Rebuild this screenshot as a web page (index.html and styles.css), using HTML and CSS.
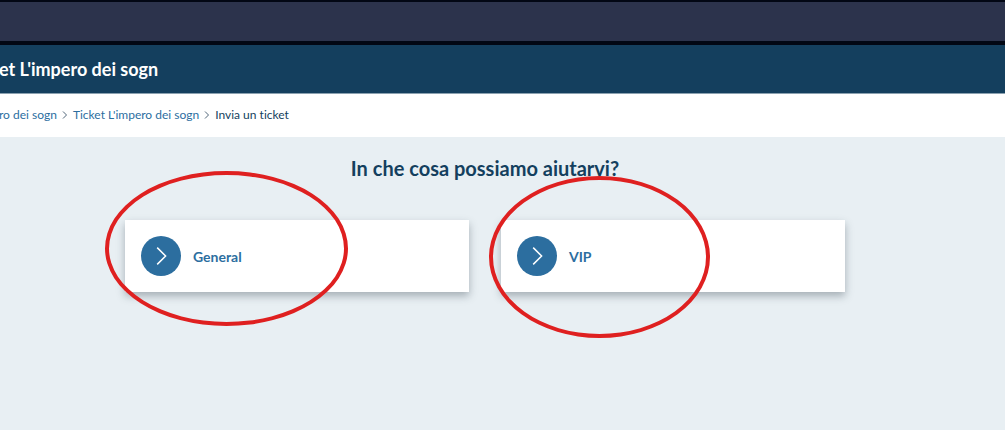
FILE: index.html
```html
<!DOCTYPE html>
<html lang="it">
<head>
<meta charset="utf-8">
<title>Invia un ticket</title>
<link rel="stylesheet" href="styles.css">
</head>
<body>
<div class="topbar"></div>
<header class="header"><span class="brand">et L'impero dei sogn</span></header>
<nav class="breadcrumb" aria-label="Breadcrumb">
  <a href="#">ro dei sogn</a>
  <svg class="sep" viewBox="0 0 6 10" aria-hidden="true"><path d="M1 1.5 4.5 5 1 8.5"/></svg>
  <a href="#">Ticket L'impero dei sogn</a>
  <svg class="sep" viewBox="0 0 6 10" aria-hidden="true"><path d="M1 1.5 4.5 5 1 8.5"/></svg>
  <span class="current">Invia un ticket</span>
</nav>
<main class="main">
  <div class="content">
    <h1 class="title">In che cosa possiamo aiutarvi?</h1>
    <div class="cards">
      <a class="card" href="#">
        <svg class="icon" viewBox="0 0 40 40" aria-hidden="true"><circle cx="20" cy="20" r="20"/><path d="M16.2 11.6 24.6 20 16.2 28.4"/></svg>
        <span class="label">General</span>
        <i class="ring ring-general"></i>
      </a>
      <a class="card" href="#">
        <svg class="icon" viewBox="0 0 40 40" aria-hidden="true"><circle cx="20" cy="20" r="20"/><path d="M16.2 11.6 24.6 20 16.2 28.4"/></svg>
        <span class="label">VIP</span>
        <i class="ring ring-vip"></i>
      </a>
    </div>
  </div>
</main>
</body>
</html>
```
FILE: styles.css
```css
* { box-sizing: border-box; }

body {
  margin: 0;
  min-height: 100vh;
  display: flex;
  flex-direction: column;
  font-family: Lato, "Liberation Sans", sans-serif;
  font-variant-ligatures: none;
  background: #e8eff3;
}

a { color: #2c6e9f; text-decoration: none; }

.topbar {
  height: 45px;
  background: #2c334c;
  border-top: 2px solid #020714;
  border-bottom: 4px solid #020714;
}

.header {
  display: flex;
  align-items: center;
  height: 49px;
  margin-left: -1px;
  background: #143f5e;
  border-bottom: 1px solid #8ba1b0;
  color: #fff;
}

.brand { font-size: 18px; font-weight: 700; line-height: 24px; }

.breadcrumb {
  display: flex;
  align-items: center;
  gap: 5px;
  height: 43px;
  margin-left: -1px;
  padding-bottom: 2px;
  background: #fff;
  font-size: 12px;
  line-height: 16px;
  white-space: nowrap;
}

.sep { width: 6px; height: 10px; fill: none; stroke: #52677a; stroke-width: 1; }
.current { color: #143f5e; }

.main { flex: 1; padding: 17px 51px 32px 16px; }

.content { max-width: 720px; margin: 0 auto; }

.title {
  margin: 0 0 38px;
  color: #143f5e;
  font-size: 20px;
  font-weight: 700;
  line-height: 28px;
  text-align: center;
}

.cards { display: grid; grid-template-columns: 1fr 1fr; gap: 32px; }

.card {
  position: relative;
  display: flex;
  align-items: center;
  gap: 12px;
  padding: 16px;
  background: #fff;
  box-shadow: 0 4px 8px rgba(40, 55, 65, .35);
  font-size: 14px;
  font-weight: 700;
  line-height: 20px;
}

.label { padding-top: 2px; }

.icon { width: 40px; height: 40px; }
.icon circle { fill: #2c6e9f; }
.icon path { fill: none; stroke: #fff; stroke-width: 1.5; }

.ring {
  position: absolute;
  z-index: 1;
  border: 4px solid #df2020;
  border-radius: 50%;
  pointer-events: none;
}

.ring-general { left: -20px; top: -49px; width: 243px; height: 155px; }
.ring-vip { left: -12px; top: -44px; width: 221px; height: 162px; }
```
